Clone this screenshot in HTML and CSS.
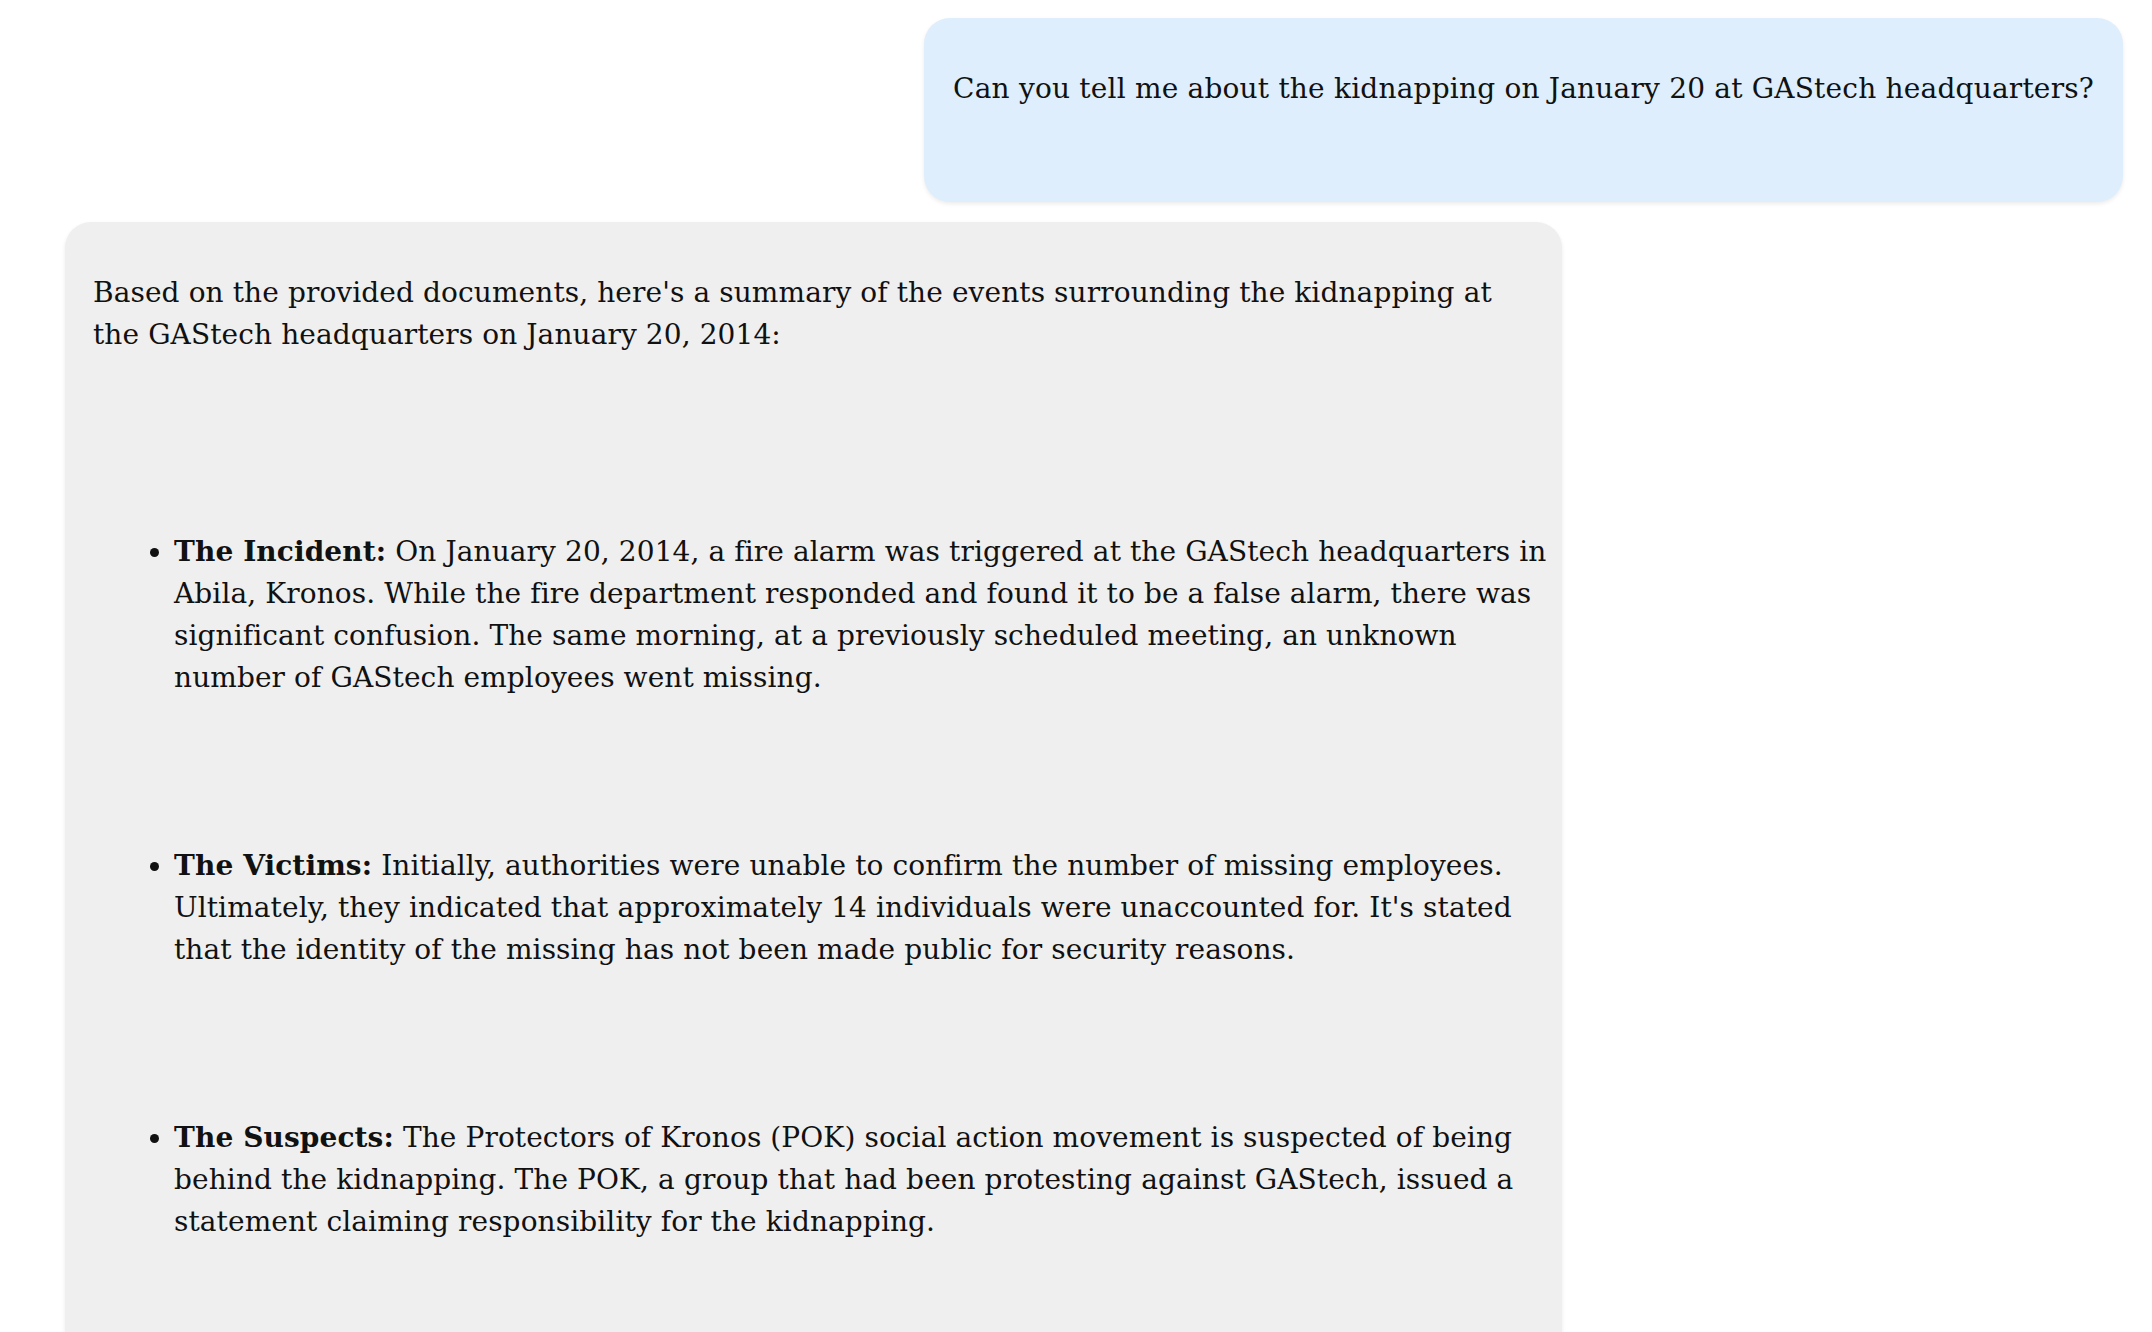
FILE: index.html
```html
<!DOCTYPE html>
<html lang="en">
<head>
<meta charset="utf-8">
<title>Chat</title>
<link rel="stylesheet" href="styles.css">
</head>
<body>
<div class="chat">
  <div class="msg msg-user">
    <p>Can you tell me about the kidnapping on January 20 at GAStech headquarters?</p>
  </div>
  <div class="msg msg-bot">
    <p class="intro">Based on the provided documents, here's a summary of the events surrounding the kidnapping at the GAStech headquarters on January 20, 2014:</p>
    <ul class="points">
      <li><strong>The Incident:</strong> On January 20, 2014, a fire alarm was triggered at the GAStech headquarters in Abila, Kronos. While the fire department responded and found it to be a false alarm, there was significant confusion. The same morning, at a previously scheduled meeting, an unknown number of GAStech employees went missing.</li>
      <li><strong>The Victims:</strong> Initially, authorities were unable to confirm the number of missing employees. Ultimately, they indicated that approximately 14 individuals were unaccounted for. It's stated that the identity of the missing has not been made public for security reasons.</li>
      <li><strong>The Suspects:</strong> The Protectors of Kronos (POK) social action movement is suspected of being behind the kidnapping. The POK, a group that had been protesting against GAStech, issued a statement claiming responsibility for the kidnapping.</li>
    </ul>
  </div>
</div>
</body>
</html>
```
FILE: styles.css
```css
html, body {
  background: #ffffff;
}
body {
  margin: 8px;
  font-family: "DejaVu Serif", "Liberation Serif", serif;
  font-size: 28px;
  line-height: 42px;
  color: #111111;
  letter-spacing: 0.1px;
}
.chat {
  display: flex;
  flex-direction: column;
  gap: 20px;
  padding: 10px 21px 0 57px;
}
.msg {
  border-radius: 26px;
  box-shadow: 0 2px 4px rgba(0, 0, 0, 0.08);
}
.msg p {
  margin: 28px 0;
}
.msg-user {
  align-self: flex-end;
  background: #deeefc;
  padding: 22px 29px 64px 29px;
  letter-spacing: 0.2px;
}
.msg-bot {
  align-self: flex-start;
  width: 1497px;
  box-sizing: border-box;
  background: #efefef;
  padding: 22px 28px 200px 28px;
}
.msg-bot .intro {
  margin-bottom: 0;
}
.points {
  margin: 175px -22px 0 0;
  padding-left: 81px;
}
.points li + li {
  margin-top: 146px;
}
.points strong {
  font-weight: bold;
}
```
